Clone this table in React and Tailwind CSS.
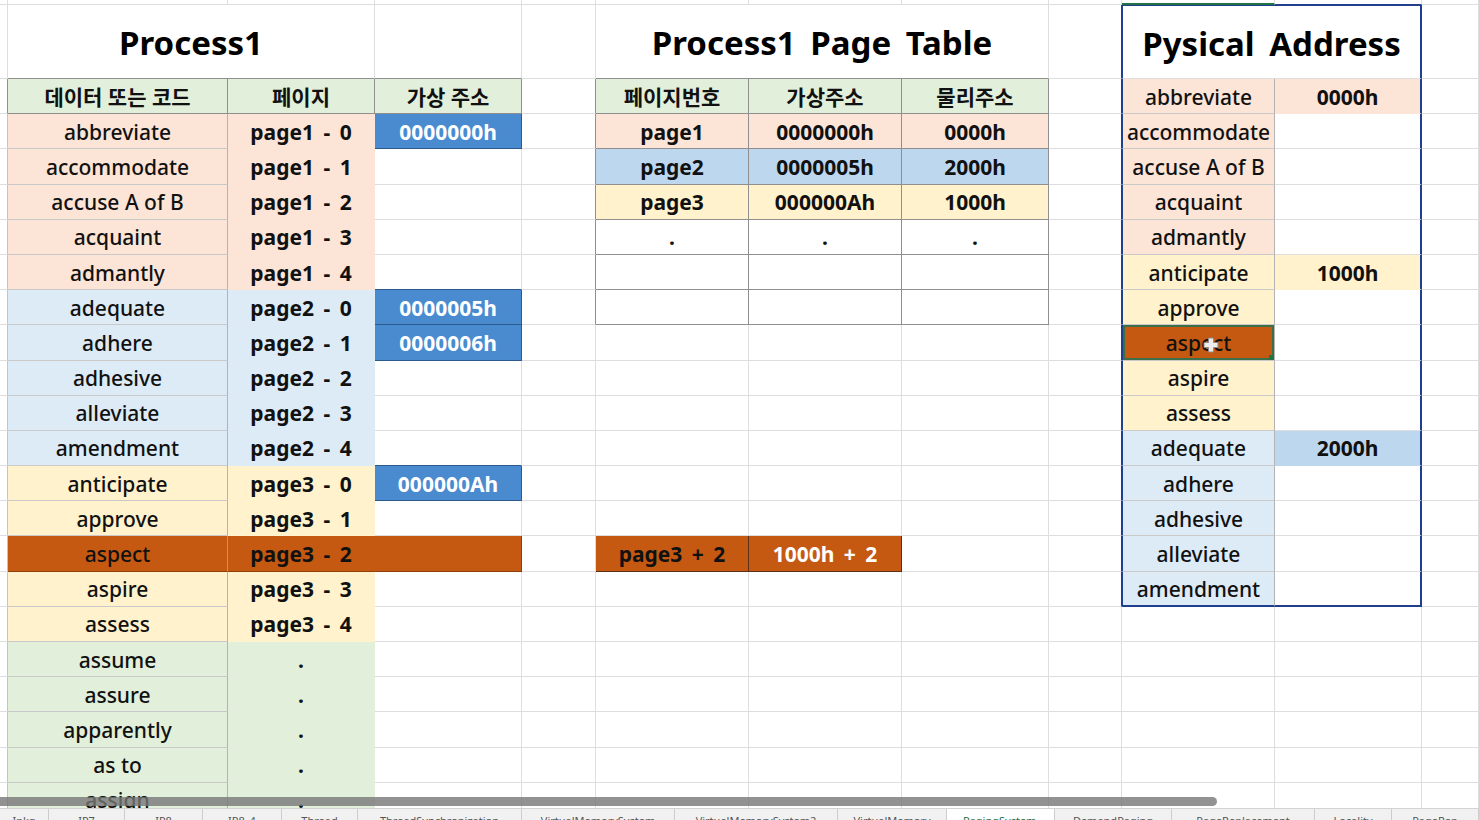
import React from 'react'

// border / colour tokens
const GRID_R = 'border-r-[#dedede]'
const GRID_B = 'border-b-[#dedede]'
const DARK_R = 'border-r-[#8f8f8f]'
const DARK_B = 'border-b-[#8f8f8f]'
const NAVY_R = 'border-r-[#213f8f]'
const NAVY_B = 'border-b-[#213f8f]'
const NAVY_L = 'border-l border-l-[#213f8f]'
const LINE_R = 'border-r-[#b3b3b3]'
const LINE_B = 'border-b-[#c9c9c9]'
const BOX_R = 'border-r-[#2c5a8e]'
const BOX_B = 'border-b-[#2c5a8e]'

const FILL = {
  peach: { bg: 'bg-[#fce4d6]', r: 'border-r-[#fce4d6]', b: 'border-b-[#fce4d6]' },
  sky: { bg: 'bg-[#ddebf7]', r: 'border-r-[#ddebf7]', b: 'border-b-[#ddebf7]' },
  cream: { bg: 'bg-[#fff2cc]', r: 'border-r-[#fff2cc]', b: 'border-b-[#fff2cc]' },
  mint: { bg: 'bg-[#e2efda]', r: 'border-r-[#e2efda]', b: 'border-b-[#e2efda]' },
  blue: { bg: 'bg-[#bdd7ee]', r: 'border-r-[#bdd7ee]', b: 'border-b-[#bdd7ee]' },
  rust: { bg: 'bg-[#c65911]', r: 'border-r-[#c65911]', b: 'border-b-[#c65911]' },
}

const TXT = 'text-[21px] font-medium text-[#111]'
const BOLD = 'text-[21px] font-bold text-[#111] [word-spacing:4px]'
const WBOLD = 'text-[21px] font-bold text-white [word-spacing:4px]'
const HEAD = 'text-[21px] font-semibold text-[#111]'
const TITLE = 'text-[33px] font-bold text-black [word-spacing:6px]'

const LEFT = [
  ['abbreviate', 'page1 - 0', '0000000h', 'peach'],
  ['accommodate', 'page1 - 1', '', 'peach'],
  ['accuse A of B', 'page1 - 2', '', 'peach'],
  ['acquaint', 'page1 - 3', '', 'peach'],
  ['admantly', 'page1 - 4', '', 'peach'],
  ['adequate', 'page2 - 0', '0000005h', 'sky'],
  ['adhere', 'page2 - 1', '0000006h', 'sky'],
  ['adhesive', 'page2 - 2', '', 'sky'],
  ['alleviate', 'page2 - 3', '', 'sky'],
  ['amendment', 'page2 - 4', '', 'sky'],
  ['anticipate', 'page3 - 0', '000000Ah', 'cream'],
  ['approve', 'page3 - 1', '', 'cream'],
  ['aspect', 'page3 - 2', '', 'rust'],
  ['aspire', 'page3 - 3', '', 'cream'],
  ['assess', 'page3 - 4', '', 'cream'],
  ['assume', '.', '', 'mint'],
  ['assure', '.', '', 'mint'],
  ['apparently', '.', '', 'mint'],
  ['as to', '.', '', 'mint'],
  ['assign', '.', '', 'mint'],
]

const TABLE = [
  ['페이지번호', '가상주소', '물리주소', 'mint'],
  ['page1', '0000000h', '0000h', 'peach'],
  ['page2', '0000005h', '2000h', 'blue'],
  ['page3', '000000Ah', '1000h', 'cream'],
  ['.', '.', '.', null],
  ['', '', '', null],
  ['', '', '', null],
]

const PHYS = [
  ['abbreviate', 'peach', '0000h', 'peach'],
  ['accommodate', 'peach'],
  ['accuse A of B', 'peach'],
  ['acquaint', 'peach'],
  ['admantly', 'peach'],
  ['anticipate', 'cream', '1000h', 'cream'],
  ['approve', 'cream'],
  ['aspect', 'rust'],
  ['aspire', 'cream'],
  ['assess', 'cream'],
  ['adequate', 'sky', '2000h', 'blue'],
  ['adhere', 'sky'],
  ['adhesive', 'sky'],
  ['alleviate', 'sky'],
  ['amendment', 'sky'],
]

const TABS = [
  { w: 'w-[49px]', label: 'Ipkg' },
  { w: 'w-[76px]', label: 'IP7' },
  { w: 'w-[78px]', label: 'IP8' },
  { w: 'w-[79px]', label: 'IP8_4' },
  { w: 'w-[76px]', label: 'Thread' },
  { w: 'w-[164px]', label: 'ThreadSynchronization' },
  { w: 'w-[153px]', label: 'VirtualMemorySystem' },
  { w: 'w-[163px]', label: 'VirtualMemorySystem2' },
  { w: 'w-[109px]', label: 'VirtualMemory' },
  { w: 'w-[108px]', label: 'PagingSystem', active: true },
  { w: 'w-[117px]', label: 'DemandPaging' },
  { w: 'w-[143px]', label: 'PageReplacement' },
  { w: 'w-[77px]', label: 'Locality' },
  { w: 'w-[87px]', label: 'PageRep' },
]

const cell = (t = '', o = {}) => ({
  t,
  span: o.span || '',
  bg: o.bg || 'bg-white',
  r: o.r || GRID_R,
  b: o.b || GRID_B,
  rw: o.rw || 'border-r',
  bw: o.bw || 'border-b',
  x: o.x || '',
  font: o.font || TXT,
  node: o.node || null,
})

function Cursor() {
  return (
    <svg className="absolute left-[80px] top-[12px]" width="16" height="16" viewBox="0 0 16 16">
      <path d="M5.5 1h5v4.5H15v5h-4.5V15h-5v-4.5H1v-5h4.5z" fill="#ececec" stroke="#8a8a8a" strokeWidth="1" />
    </svg>
  )
}

function buildRows() {
  const rows = []

  // top strip
  rows.push(
    Array.from({ length: 12 }, (_, i) => {
      if (i === 9) return cell('', { bw: 'border-b-2', b: 'border-b-[#217346]' })
      if (i === 10) return cell('', { b: NAVY_B })
      return cell('')
    })
  )

  // titles
  rows.push([
    cell(''),
    cell('Process1', { span: 'col-span-2', b: DARK_B, font: TITLE }),
    cell('', { b: DARK_B }),
    cell(''),
    cell('Process1 Page Table', { span: 'col-span-3', b: DARK_B, font: TITLE }),
    cell('', { r: NAVY_R }),
    cell('Pysical Address', {
      span: 'col-span-2',
      x: `${NAVY_L} border-t border-t-[#213f8f]`,
      rw: 'border-r-2',
      r: NAVY_R,
      font: TITLE,
    }),
    cell(''),
  ])

  for (let g = 2; g <= 22; g++) {
    const row = []
    row.push(cell('', { r: g === 2 ? DARK_R : 'border-r-[#c4c4c4]' }))

    // Process1
    if (g === 2) {
      const m = FILL.mint
      row.push(cell('데이터 또는 코드', { bg: m.bg, r: DARK_R, b: DARK_B, font: HEAD }))
      row.push(cell('페이지', { bg: m.bg, r: DARK_R, b: DARK_B, font: HEAD }))
      row.push(cell('가상 주소', { bg: m.bg, r: DARK_R, b: DARK_B, font: HEAD }))
    } else {
      const [word, page, addr, color] = LEFT[g - 3]
      const f = FILL[color]
      const rust = color === 'rust'
      const nextAddr = LEFT[g - 2] && LEFT[g - 2][2]
      row.push(
        cell(word, {
          bg: f.bg,
          r: rust ? 'border-r-[#d9895a]' : LINE_R,
          b: rust ? 'border-b-[#8e3f0c]' : LINE_B,
        })
      )
      row.push(cell(page, { bg: f.bg, r: f.r, b: rust ? 'border-b-[#8e3f0c]' : f.b, font: BOLD }))
      if (addr) row.push(cell(addr, { bg: 'bg-[#4a8bd0]', r: BOX_R, b: BOX_B, font: WBOLD }))
      else if (rust) row.push(cell('', { bg: f.bg, r: 'border-r-[#8e3f0c]', b: 'border-b-[#8e3f0c]' }))
      else if (nextAddr) row.push(cell('', { b: BOX_B }))
      else row.push(cell(''))
    }

    row.push(cell('', { r: g <= 8 ? DARK_R : GRID_R }))

    // page table
    if (g <= 8) {
      const [a, b, c, color] = TABLE[g - 2]
      const f = color ? FILL[color] : { bg: 'bg-white' }
      const font = g === 2 ? HEAD : BOLD
      row.push(cell(a, { bg: f.bg, r: DARK_R, b: DARK_B, font }))
      row.push(cell(b, { bg: f.bg, r: DARK_R, b: DARK_B, font }))
      row.push(cell(c, { bg: f.bg, r: DARK_R, b: DARK_B, font }))
    } else if (g === 15) {
      row.push(cell('page3 + 2', { bg: FILL.rust.bg, r: 'border-r-[#5c3015]', b: 'border-b-[#5c3015]', font: BOLD }))
      row.push(cell('1000h + 2', { bg: FILL.rust.bg, r: 'border-r-[#5c3015]', b: 'border-b-[#5c3015]', font: WBOLD }))
      row.push(cell(''))
    } else {
      row.push(cell(''), cell(''), cell(''))
    }

    row.push(cell('', { r: g <= 16 ? NAVY_R : GRID_R }))

    // physical address
    if (g <= 16) {
      const [word, color, val, vcolor] = PHYS[g - 2]
      const f = FILL[color]
      const last = g === 16
      const selected = color === 'rust'
      row.push(
        cell(word, {
          bg: f.bg,
          x: `${NAVY_L} ${selected ? 'relative ring-2 ring-inset ring-[#3c6e47]' : ''}`,
          r: LINE_R,
          b: last ? NAVY_B : LINE_B,
          bw: last ? 'border-b-2' : 'border-b',
          node: selected ? (
            <>
              <Cursor />
              <span className="absolute right-0 bottom-0 w-[5px] h-[5px] bg-[#217346]" />
            </>
          ) : null,
        })
      )
      const vf = vcolor ? FILL[vcolor] : null
      row.push(
        cell(val || '', {
          bg: vf ? vf.bg : 'bg-white',
          rw: 'border-r-2',
          r: NAVY_R,
          b: last ? NAVY_B : vf ? vf.b : GRID_B,
          bw: last ? 'border-b-2' : 'border-b',
          font: BOLD,
        })
      )
    } else {
      row.push(cell(''), cell(''))
    }

    row.push(cell(''))
    rows.push(row)
  }
  return rows
}

export default function App() {
  const rows = buildRows()

  return (
    <div className="w-[1479px] h-[820px] overflow-hidden bg-white flex flex-col font-['Noto_Sans','Noto_Sans_CJK_KR',sans-serif]">
      <div className="relative flex-1 overflow-hidden">
        <div className="grid grid-cols-[8px_220px_147px_147px_74px_153px_153px_147px_73px_153px_147px_57px] grid-rows-[5px_74px_repeat(21,35.2px)]">
          {rows.flat().map((c, i) => (
            <div
              key={i}
              className={`${c.span} ${c.bg} ${c.rw} ${c.bw} ${c.r} ${c.b} ${c.x} ${c.font} flex items-center justify-center whitespace-nowrap overflow-hidden leading-none pt-[2px]`}
            >
              {c.t}
              {c.node}
            </div>
          ))}
        </div>

        {/* horizontal scrollbar */}
        <div className="absolute left-0 bottom-[2px] h-[9px] w-[1217px] rounded-r-full bg-[#777777]/80" />
      </div>

      {/* sheet tabs */}
      <div className="h-[12px] flex bg-[#f1f1f1] border-t border-t-[#d2d2d2] overflow-hidden">
        {TABS.map((t) => (
          <div
            key={t.label}
            className={`${t.w} shrink-0 border-r border-r-[#cdcdcd] overflow-hidden pt-[6px] text-[11px] leading-none ${
              t.active ? 'bg-white text-[#217346] pl-[16px]' : 'text-[#555] text-center'
            }`}
          >
            {t.label}
          </div>
        ))}
      </div>
    </div>
  )
}
